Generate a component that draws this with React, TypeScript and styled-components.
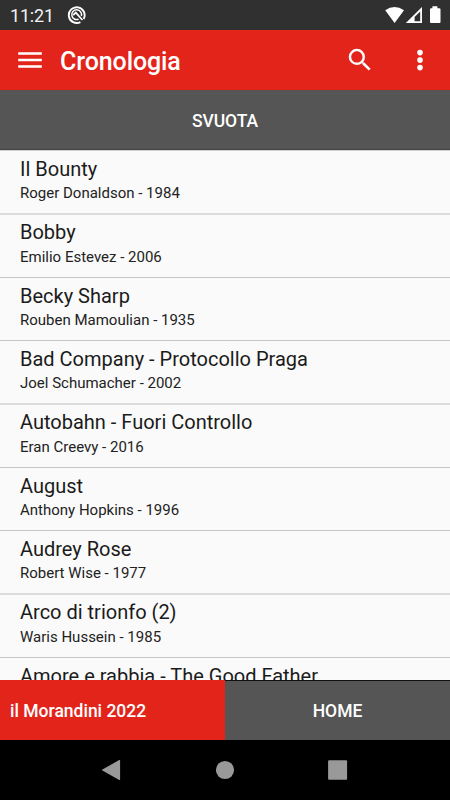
import React from "react";
import styled, { createGlobalStyle } from "styled-components";

const GlobalStyle = createGlobalStyle`
  *, *::before, *::after { box-sizing: border-box; }
  html, body { margin: 0; padding: 0; background: #000; }
  body { font-family: Roboto, "Liberation Sans", sans-serif; overflow: hidden; }
  button { font: inherit; color: inherit; border: 0; background: none; padding: 0; }
  svg { display: block; }
`;

const Screen = styled.div`
  width: 450px;
  height: 800px;
  display: flex;
  flex-direction: column;
  background: #fafafa;
`;

const StatusBar = styled.div`
  height: 30px;
  flex: none;
  display: flex;
  align-items: center;
  justify-content: space-between;
  padding: 0 9px 0 10px;
  background: #303030;
  color: #fff;
`;

const StatusGroup = styled.div`
  display: flex;
  align-items: center;
`;

const Clock = styled.span`
  width: 57px;
  font-size: 18px;
  line-height: 30px;
  letter-spacing: -0.2px;
  color: #f2f2f2;
  padding-top: 1px;
`;

const AppBar = styled.header`
  height: 60px;
  flex: none;
  display: flex;
  align-items: center;
  padding: 0 15px;
  background: #e3241b;
  color: #fff;
`;

const Title = styled.h1`
  flex: 1;
  margin: 0;
  padding: 4px 0 0 15px;
  font-size: 25px;
  line-height: 30px;
  font-weight: 500;
  letter-spacing: -0.1px;
`;

const IconButton = styled.button<{ $gap?: number }>`
  width: 30px;
  height: 30px;
  margin-left: ${(p) => p.$gap ?? 0}px;
`;

const ClearButton = styled.button`
  && {
    height: 60px;
    flex: none;
    background: #555;
    color: #fff;
    font-size: 17.5px;
    font-weight: 500;
    letter-spacing: -0.1px;
    padding-top: 2px;
    border-top: 1px solid #5d4f4e;
    border-bottom: 1px solid #444;
  }
`;

const List = styled.ul`
  flex: 1;
  min-height: 0;
  margin: 0;
  padding: 1px 0 0;
  list-style: none;
  overflow: hidden;
  background: #fafafa;
  box-shadow: inset 0 1px 0 #d0d0d0;
`;

const FilmTitle = styled.div`
  font-size: 20px;
  line-height: 28px;
  color: #1b1b1b;
  white-space: nowrap;
`;

const FilmMeta = styled.div`
  font-size: 15px;
  line-height: 20px;
  color: #222;
  white-space: nowrap;
`;

const Row = styled.li`
  height: 63px;
  padding: 4px 20px 0;
  border-bottom: 1px solid #c6c6c6;

  &:nth-child(3n + 1) {
    height: 64px;
    border-bottom: 2px solid #dcdcdc;
  }

  &:nth-child(3n + 2) {
    padding-top: 3px;
  }

  &:nth-child(3n + 2) ${FilmTitle} {
    margin-bottom: 1px;
  }
`;

const Tabs = styled.nav`
  height: 60px;
  flex: none;
  display: grid;
  grid-template-columns: 225px 225px;
`;

const Tab = styled.button<{ $active?: boolean }>`
  && {
    background: ${(p) => (p.$active ? "#e3241b" : "#555")};
    color: #fff;
    font-size: 17.5px;
    font-weight: 500;
    text-align: ${(p) => (p.$active ? "left" : "center")};
    padding: ${(p) => (p.$active ? "2px 0 0 10px" : "1px 0 0")};
    border-top: ${(p) => (p.$active ? "0" : "1px solid #111")};
  }
`;

const NavBar = styled.div`
  height: 60px;
  flex: none;
  display: grid;
  grid-template-columns: repeat(3, 30px);
  column-gap: 83px;
  justify-content: center;
  align-items: center;
  background: #000;
  color: #999;
`;

const films = [
  ["Il Bounty", "Roger Donaldson - 1984"],
  ["Bobby", "Emilio Estevez - 2006"],
  ["Becky Sharp", "Rouben Mamoulian - 1935"],
  ["Bad Company - Protocollo Praga", "Joel Schumacher - 2002"],
  ["Autobahn - Fuori Controllo", "Eran Creevy - 2016"],
  ["August", "Anthony Hopkins - 1996"],
  ["Audrey Rose", "Robert Wise - 1977"],
  ["Arco di trionfo (2)", "Waris Hussein - 1985"],
  ["Amore e rabbia - The Good Father", ""],
];

const NotificationIcon = () => (
  <svg width="20" height="20" viewBox="0 0 20 20" fill="none" stroke="#fff">
    <path d="M13.4 17.1A7.9 7.9 0 1 1 16.6 14" strokeWidth="1.9" />
    <path d="M11.6 14.2A4.9 4.9 0 1 1 14.4 11" strokeWidth="1.5" />
    <path d="M6.2 10.2 8.8 7.6 15.4 15" strokeWidth="1.7" />
  </svg>
);

const StatusIcons = () => (
  <svg width="58" height="20" viewBox="0 0 58 20" fill="#fff">
    <path d="M2.2 5.2Q11.5-1.4 21 5.2L11.6 18Z" />
    <path fillRule="evenodd" d="M39 2v16H22.8ZM37.2 6.4 31.6 12V16.2H37.2Z" />
    <path d="M49.4 1.3h5v1.9h2q1.1 0 1.1 1.1v12.6q0 1.1-1.1 1.1h-8.3q-1.1 0-1.1-1.1V4.3q0-1.1 1.1-1.1h1.3Z" />
  </svg>
);

const MenuIcon = () => (
  <svg width="30" height="30" viewBox="0 0 30 30" fill="currentColor">
    <path d="M3.2 7.2h23.6v2.6h-23.6zM3.2 13.7h23.6v2.6h-23.6zM3.2 20.2h23.6v2.6h-23.6z" />
  </svg>
);

const SearchIcon = () => (
  <svg width="30" height="30" viewBox="0 0 24 24" fill="currentColor">
    <path d="M15.5 14h-.79l-.28-.27A6.47 6.47 0 0 0 16 9.5 6.5 6.5 0 1 0 9.5 16c1.61 0 3.09-.59 4.23-1.57l.27.28v.79l5 4.99L20.49 19zm-6 0C7.01 14 5 11.99 5 9.5S7.01 5 9.5 5 14 7.01 14 9.5 11.99 14 9.5 14" />
  </svg>
);

const MoreIcon = () => (
  <svg width="30" height="30" viewBox="0 0 30 30" fill="currentColor">
    <circle cx="15" cy="7.6" r="2.8" />
    <circle cx="15" cy="15.1" r="2.8" />
    <circle cx="15" cy="22.6" r="2.8" />
  </svg>
);

const BackIcon = () => (
  <svg width="30" height="30" viewBox="0 0 30 30" fill="currentColor">
    <path d="M5.4 14.4 22.2 5.1q.9-.4.9.5v18.8q0 .9-.9.5L5.4 15.6q-1-.6 0-1.2Z" />
  </svg>
);

const HomeIcon = () => (
  <svg width="30" height="30" viewBox="0 0 30 30" fill="currentColor">
    <circle cx="15" cy="15" r="9.1" />
  </svg>
);

const RecentIcon = () => (
  <svg width="30" height="30" viewBox="0 0 30 30" fill="currentColor">
    <rect x="5.1" y="5.3" width="19" height="19.4" rx="1" />
  </svg>
);

export default function App() {
  return (
    <>
      <GlobalStyle />
      <Screen>
        <StatusBar>
          <StatusGroup>
            <Clock>11:21</Clock>
            <NotificationIcon />
          </StatusGroup>
          <StatusGroup>
            <StatusIcons />
          </StatusGroup>
        </StatusBar>
        <AppBar>
          <IconButton aria-label="Menu"><MenuIcon /></IconButton>
          <Title>Cronologia</Title>
          <IconButton aria-label="Cerca"><SearchIcon /></IconButton>
          <IconButton aria-label="Altro" $gap={30}><MoreIcon /></IconButton>
        </AppBar>
        <ClearButton>SVUOTA</ClearButton>
        <List>
          {films.map(([title, meta]) => (
            <Row key={title}>
              <FilmTitle>{title}</FilmTitle>
              <FilmMeta>{meta}</FilmMeta>
            </Row>
          ))}
        </List>
        <Tabs>
          <Tab $active>il Morandini 2022</Tab>
          <Tab>HOME</Tab>
        </Tabs>
        <NavBar>
          <BackIcon />
          <HomeIcon />
          <RecentIcon />
        </NavBar>
      </Screen>
    </>
  );
}
